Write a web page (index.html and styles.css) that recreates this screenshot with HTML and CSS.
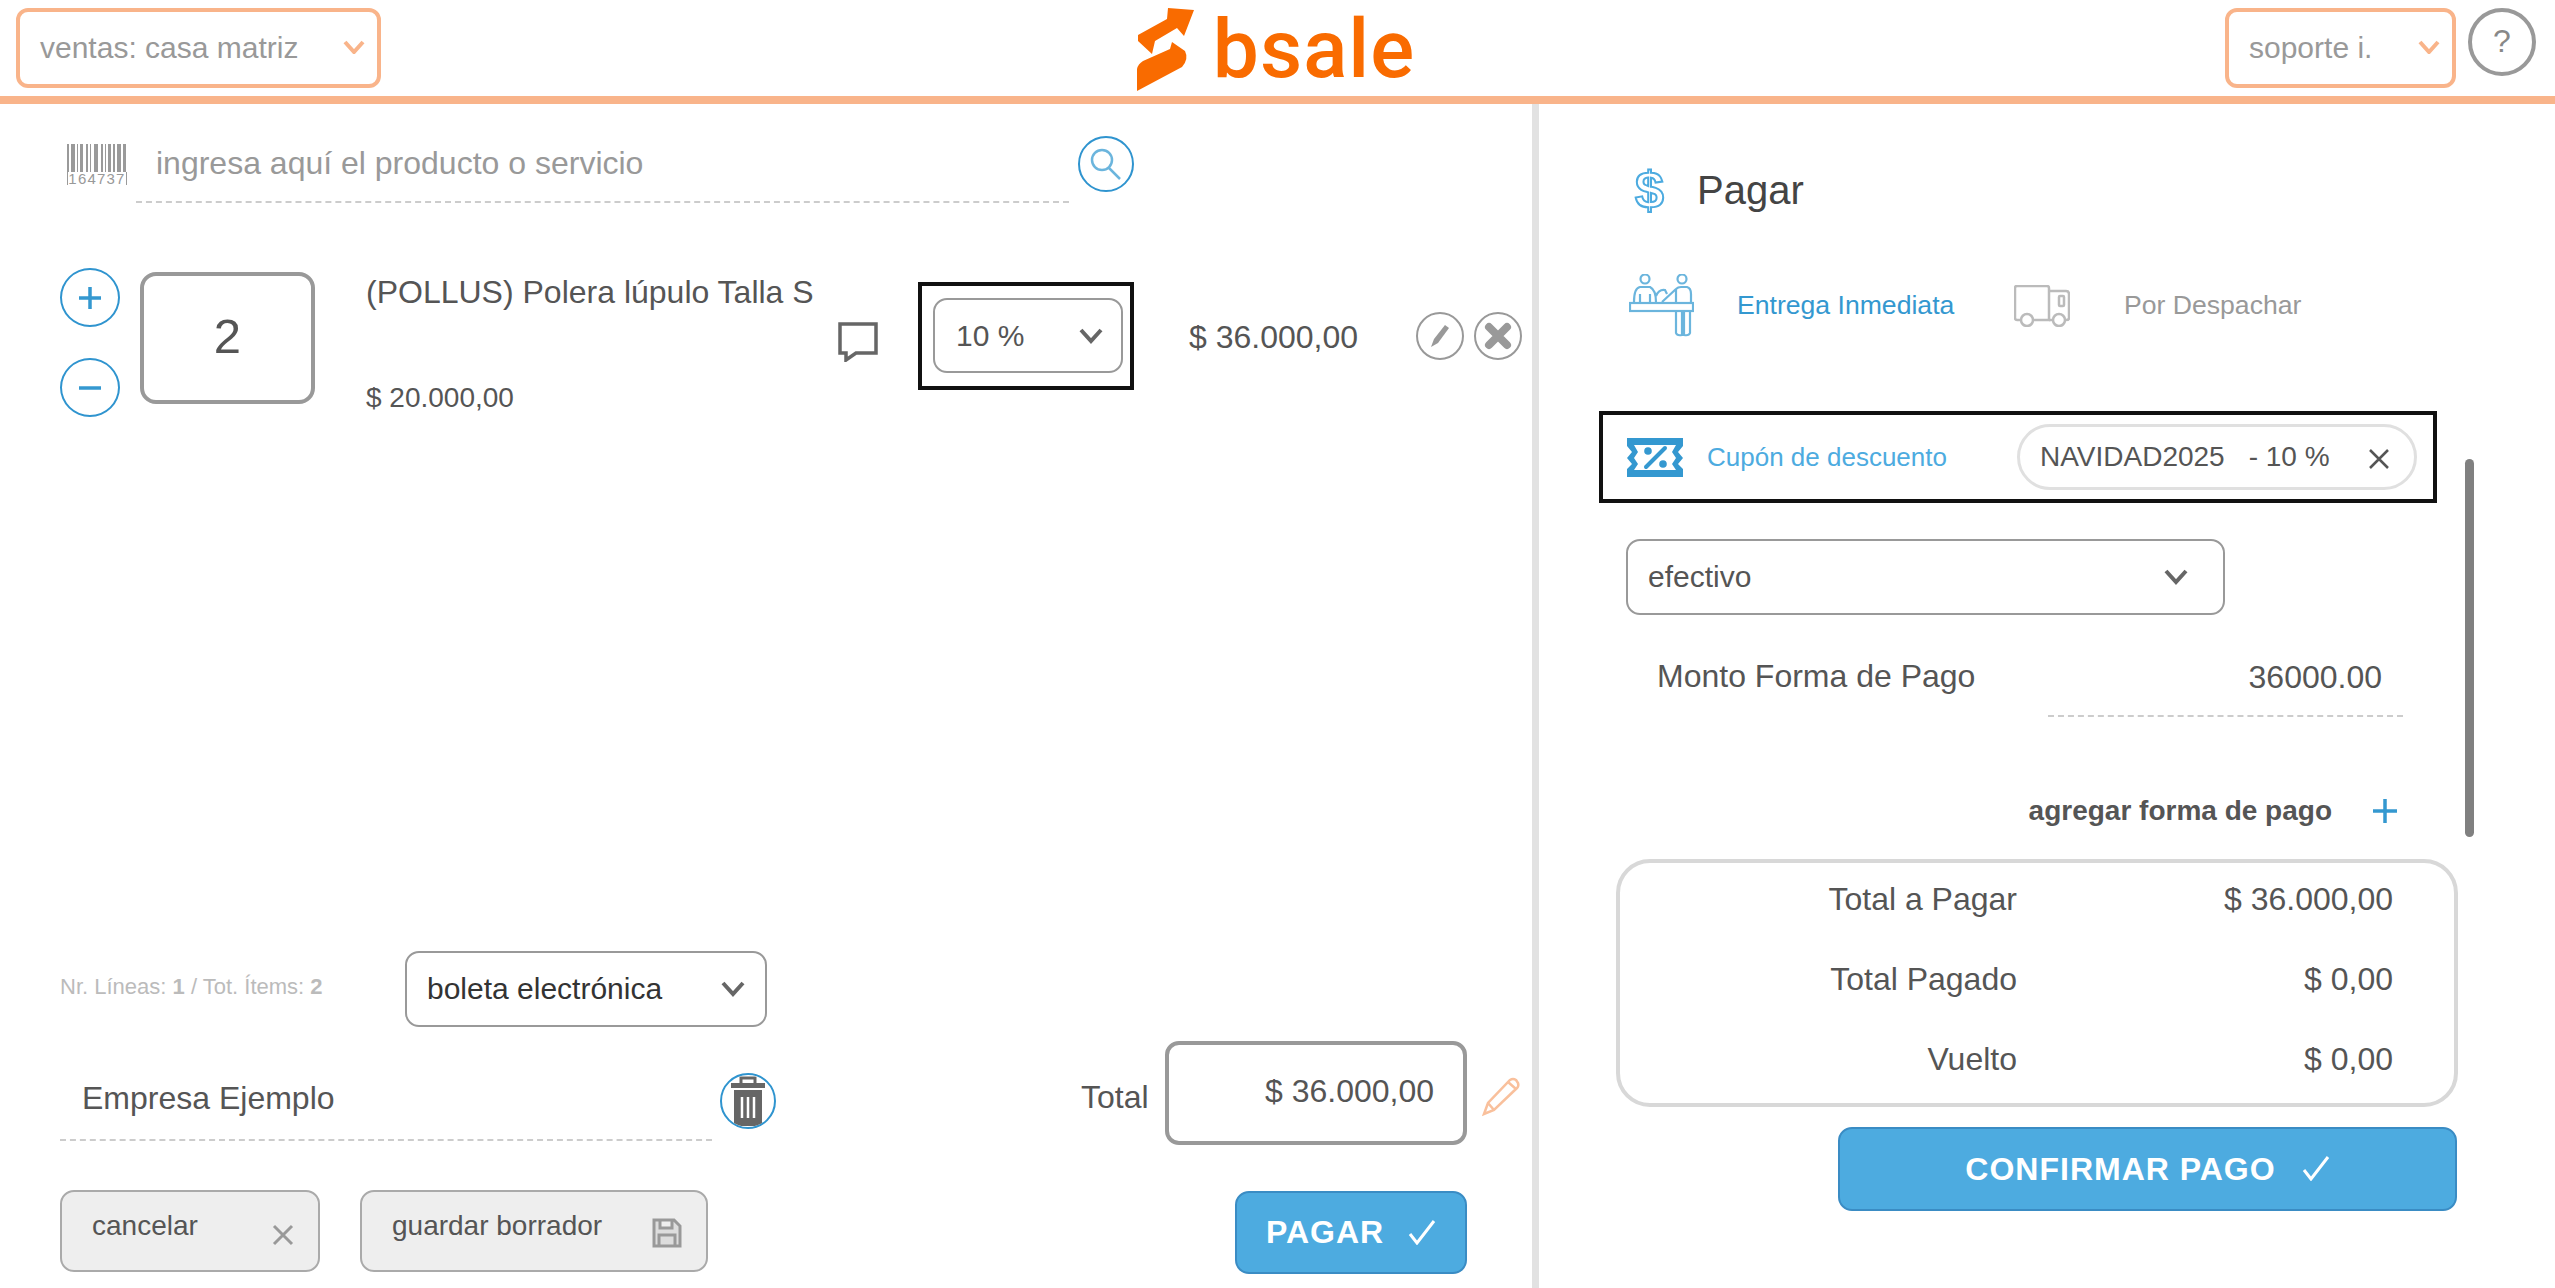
FILE: index.html
```html
<!DOCTYPE html>
<html lang="en">
<head>
    <meta charset="UTF-8">
    <meta name="viewport" content="width=device-width, initial-scale=1.0">
    <title>bsale punto de venta</title>
    <link rel="stylesheet" href="styles.css">
</head>
<body>
    <header class="topbar">
        <div class="topbar-left">
            <div class="top-select select-ventas">
                <span>ventas: casa matriz</span>
                <svg class="chev-top" viewBox="0 0 22 14"><path d="M2 2l9 10 9-10"/></svg>
            </div>
        </div>
        <div class="logo">
            <svg class="logo-mark" viewBox="0 0 58 88">
                <path d="M1 31 30 15 31 4 57 6 47 32 40 24 18 37 15 50 1 37Z"/>
                <path d="M35 38 48 47Q52 55 45 63L0 87V65Q1 60 6 57L33 45Z"/>
            </svg>
            <span class="logo-text">bsale</span>
        </div>
        <div class="topbar-right">
            <div class="top-select select-soporte">
                <span>soporte i.</span>
                <svg class="chev-top" viewBox="0 0 22 14"><path d="M2 2l9 10 9-10"/></svg>
            </div>
            <div class="help-btn">?</div>
        </div>
    </header>

    <main class="layout">
        <section class="sale-panel">
            <div class="search-row">
                <svg class="barcode" viewBox="0 0 62 42">
                    <g fill="#9a9a9a">
                        <rect x="1" width="2" height="28"/><rect x="5" width="4" height="28"/><rect x="11" width="1" height="28"/><rect x="14" width="3" height="28"/>
                        <rect x="20" width="2" height="28"/><rect x="24" width="1" height="28"/><rect x="28" width="4" height="28"/><rect x="35" width="2" height="28"/>
                        <rect x="39" width="1" height="28"/><rect x="42" width="3" height="28"/><rect x="47" width="2" height="28"/><rect x="51" width="4" height="28"/><rect x="57" width="3" height="28"/>
                        <rect x="1" y="28" width="1" height="13"/><rect x="60" y="28" width="1" height="13"/>
                    </g>
                    <text x="31" y="40" class="barcode-num">164737</text>
                </svg>
                <input class="search-input" type="text" placeholder="ingresa aquí el producto o servicio">
                <div class="circle-btn search-btn">
                    <svg viewBox="0 0 34 34" width="34" height="34"><circle cx="13" cy="13" r="10"/><path d="M20 21l11 11"/></svg>
                </div>
            </div>

            <div class="item-row">
                <div class="stepper">
                    <div class="circle-btn step-btn"><svg viewBox="0 0 26 26" width="26" height="26"><path d="M13 2v22M2 13h22"/></svg></div>
                    <div class="circle-btn step-btn"><svg viewBox="0 0 26 26" width="26" height="26"><path d="M2 13h22"/></svg></div>
                </div>
                <div class="qty-box">2</div>
                <div class="item-info">
                    <div class="item-name">(POLLUS) Polera lúpulo Talla S</div>
                    <div class="item-price">$ 20.000,00</div>
                </div>
                <svg class="comment-icon" viewBox="0 0 40 40"><path d="M2 2H38V31H18L8 38V31H2Z"/></svg>
                <div class="highlight-box discount-box">
                    <div class="select-box discount-select">
                        <span>10 %</span>
                        <svg class="chev" viewBox="0 0 24 16"><path d="M2 2l10 11L22 2"/></svg>
                    </div>
                </div>
                <div class="item-total">$ 36.000,00</div>
                <div class="round-grey">
                    <svg viewBox="0 0 24 28" width="24" height="28"><path d="M3 25l3-8L17 3l4 3L10 21Z"/></svg>
                </div>
                <div class="round-grey round-close">
                    <svg viewBox="0 0 28 28" width="28" height="28"><path d="M5 5l18 18M23 5L5 23"/></svg>
                </div>
            </div>

            <div class="sale-bottom">
                <div class="doc-row">
                    <div class="line-count">Nr. Líneas: <b>1</b> / Tot. Ítems: <b>2</b></div>
                    <div class="select-box doc-select">
                        <span>boleta electrónica</span>
                        <svg class="chev" viewBox="0 0 24 16"><path d="M2 2l10 11L22 2"/></svg>
                    </div>
                </div>
                <div class="client-row">
                    <div class="client-name">Empresa Ejemplo</div>
                    <div class="circle-btn trash-btn">
                        <svg viewBox="0 0 40 52" width="40" height="52">
                            <path class="trash-handle" d="M13 8V3H27V8"/>
                            <rect x="3" y="8" width="34" height="5" fill="#666"/>
                            <path fill="#666" d="M6 15H34V49Q34 51 32 51H8Q6 51 6 49Z"/>
                            <path class="trash-bars" d="M14 22V43M20 22V43M26 22V43"/>
                        </svg>
                    </div>
                    <div class="total-label">Total</div>
                    <div class="total-box">$ 36.000,00</div>
                    <svg class="edit-total" viewBox="0 0 40 42"><path d="M3 38l4-11L29 4q3-2 6 0l2 3q1 3-1 5L13 34ZM7 27l6 7M27 6l8 7"/></svg>
                </div>
                <div class="action-row">
                    <div class="grey-btn cancel-btn">
                        <span>cancelar</span>
                        <svg viewBox="0 0 22 22" width="22" height="22"><path d="M2 2l18 18M20 2L2 20"/></svg>
                    </div>
                    <div class="grey-btn draft-btn">
                        <span>guardar borrador</span>
                        <svg viewBox="0 0 30 30" width="30" height="30"><path d="M2 2H22L28 8V28H2ZM8 2V10H20V2M7 28V17H23V28"/></svg>
                    </div>
                    <div class="blue-btn pay-btn">
                        <span>PAGAR</span>
                        <svg class="check" viewBox="0 0 28 26"><path d="M2 15l7 9L26 2"/></svg>
                    </div>
                </div>
            </div>
        </section>

        <section class="pay-panel">
            <div class="pay-title">
                <span class="dollar-icon">$</span>
                <span>Pagar</span>
            </div>
            <div class="delivery-row">
                <svg class="desk-icon" viewBox="0 0 65 63">
                    <circle cx="16" cy="5" r="4.5"/><circle cx="53" cy="5" r="4.5"/>
                    <path d="M5 28Q5 14 11 13H21Q27 16 27 28M11 20V28M21 20V28"/>
                    <path d="M27 22Q30 15 36 16L38 20"/>
                    <path d="M33 28 47 15Q49 13 52 13H58Q62 14 62 20V29M47 15V29"/>
                    <rect x="1" y="29" width="63" height="8"/>
                    <path d="M47 37V59Q48 62 53 61V38M55 38V61Q60 62 61 59V37"/>
                </svg>
                <span class="delivery-now">Entrega Inmediata</span>
                <svg class="truck-icon" viewBox="0 0 56 42">
                    <path d="M7 35H3Q1 35 1 33V3Q1 1 3 1H33Q35 1 35 3V35H19"/>
                    <path d="M35 6H52Q55 6 55 9V33Q55 35 52 35H51M39 35H35"/>
                    <circle cx="13" cy="35" r="6"/><circle cx="45" cy="35" r="6"/>
                    <rect x="45" y="11" width="5" height="10" rx="1"/>
                </svg>
                <span class="delivery-later">Por Despachar</span>
            </div>

            <div class="highlight-box coupon-box">
                <svg class="ticket-icon" viewBox="0 0 56 39">
                    <path fill="#3498d0" d="M0 0H56V8L51 14 56 20 51 26 56 31V39H0V31L5 26 0 20 5 14 0 8Z"/>
                    <path fill="#fff" d="M7 7H49L45 14 49 20 45 26 49 32H7L11 26 7 20 11 14Z"/>
                    <circle cx="21" cy="13" r="3.8" fill="#3498d0"/>
                    <circle cx="36" cy="26" r="3.8" fill="#3498d0"/>
                    <path d="M19 29 38 10" stroke="#3498d0" stroke-width="4" stroke-linecap="round"/>
                </svg>
                <span class="coupon-label">Cupón de descuento</span>
                <div class="coupon-pill">
                    <span class="coupon-code">NAVIDAD2025</span>
                    <span class="coupon-value">- 10 %</span>
                    <svg viewBox="0 0 22 22" width="22" height="22"><path d="M2 2l18 18M20 2L2 20"/></svg>
                </div>
            </div>

            <div class="select-box method-select">
                <span>efectivo</span>
                <svg class="chev" viewBox="0 0 24 16"><path d="M2 2l10 11L22 2"/></svg>
            </div>
            <div class="amount-row">
                <div class="amount-label">Monto Forma de Pago</div>
                <div class="amount-value">36000.00</div>
            </div>
            <div class="add-method">
                <span>agregar forma de pago</span>
                <svg viewBox="0 0 26 26" width="26" height="26"><path d="M13 1v24M1 13h24"/></svg>
            </div>

            <div class="totals-card">
                <div class="totals-row"><span>Total a Pagar</span><span>$ 36.000,00</span></div>
                <div class="totals-row"><span>Total Pagado</span><span>$ 0,00</span></div>
                <div class="totals-row"><span>Vuelto</span><span>$ 0,00</span></div>
            </div>
            <div class="blue-btn confirm-btn">
                <span>CONFIRMAR PAGO</span>
                <svg class="check" viewBox="0 0 28 26"><path d="M2 15l7 9L26 2"/></svg>
            </div>
            <div class="scroll-thumb"></div>
        </section>
    </main>
</body>
</html>
```

FILE: styles.css
```css
* {
    box-sizing: border-box;
}
html, body {
    margin: 0;
    height: 100%;
}
body {
    font-family: "Liberation Sans", Arial, sans-serif;
    color: #555;
    background: #fff;
    overflow: hidden;
}
svg {
    display: block;
    flex: none;
}

/* top bar */
.topbar {
    height: 104px;
    border-bottom: 8px solid #f9b48a;
    display: grid;
    grid-template-columns: 1fr auto 1fr;
    padding: 8px 19px 0 16px;
}
.topbar-right {
    display: flex;
    justify-content: flex-end;
    align-items: flex-start;
    gap: 12px;
}
.top-select {
    height: 80px;
    border: 4px solid #f9b48a;
    border-radius: 12px;
    display: flex;
    align-items: center;
    justify-content: space-between;
    font-size: 30px;
    color: #999;
    padding: 0 12px 0 20px;
}
.select-ventas {
    width: 365px;
}
.select-soporte {
    width: 231px;
}
.chev-top {
    width: 22px;
    height: 14px;
    margin-top: -2px;
}
.chev-top path {
    fill: none;
    stroke: #f9b48a;
    stroke-width: 4;
}
.help-btn {
    width: 68px;
    height: 68px;
    border: 4px solid #999;
    border-radius: 50%;
    text-align: center;
    font-size: 32px;
    line-height: 58px;
    color: #888;
}
.logo {
    display: flex;
    align-items: flex-start;
    margin-top: -4px;
}
.logo-mark {
    width: 58px;
    height: 88px;
    fill: #f96b00;
}
.logo-text {
    font-family: Roboto, sans-serif;
    font-weight: 500;
    font-size: 82px;
    line-height: 96px;
    letter-spacing: 1px;
    color: #f96b00;
    margin: -3px 0 0 18px;
}

.layout {
    display: grid;
    grid-template-columns: 1539px 1fr;
    height: 1184px;
}

/* left side */
.sale-panel {
    border-right: 7px solid #e2e2e2;
    display: flex;
    flex-direction: column;
    padding: 32px 65px 14px 60px;
}
.search-row {
    display: flex;
    align-items: flex-start;
}
.barcode {
    width: 62px;
    height: 42px;
    margin: 8px 8px 0 6px;
}
.barcode-num {
    font-size: 15px;
    letter-spacing: 1.2px;
    fill: #999;
    text-anchor: middle;
}
.search-input {
    width: 933px;
    height: 67px;
    border: 0;
    border-bottom: 2px dashed #ccc;
    padding: 0 0 11px 20px;
    font: 32px "Liberation Sans", Arial, sans-serif;
    outline: none;
}
.search-input::placeholder {
    color: #999;
    opacity: 1;
}
.circle-btn {
    border: 2px solid #2f94cf;
    border-radius: 50%;
    display: flex;
    align-items: center;
    justify-content: center;
    flex: none;
}
.search-btn {
    width: 56px;
    height: 56px;
    margin-left: 9px;
}
.search-btn svg {
    fill: none;
    stroke: #6bb5dd;
    stroke-width: 2.5;
}
.item-row {
    display: flex;
    align-items: flex-start;
    margin-top: 65px;
    height: 149px;
}
.stepper {
    width: 60px;
    height: 149px;
    flex: none;
    display: flex;
    flex-direction: column;
    justify-content: space-between;
}
.step-btn {
    width: 60px;
    height: 59px;
}
.step-btn svg {
    fill: none;
    stroke: #3498d0;
    stroke-width: 3.5;
}
.qty-box {
    width: 175px;
    height: 132px;
    flex: none;
    margin: 4px 0 0 20px;
    border: 4px solid #999;
    border-radius: 16px;
    text-align: center;
    font-size: 49px;
    line-height: 120px;
}
.item-info {
    width: 472px;
    margin-left: 51px;
    flex: none;
}
.item-name {
    font-size: 32px;
    line-height: 36px;
    margin-top: 6px;
    white-space: nowrap;
}
.item-price {
    font-size: 28px;
    line-height: 34px;
    margin-top: 71px;
}
.comment-icon {
    width: 40px;
    height: 40px;
    margin-top: 54px;
    fill: none;
    stroke: #666;
    stroke-width: 3.5;
}
.highlight-box {
    border: 4px solid #111;
}
.discount-box {
    width: 216px;
    height: 108px;
    flex: none;
    margin: 14px 0 0 40px;
    padding: 12px 7px 0 11px;
}
.select-box {
    border: 2px solid #999;
    border-radius: 14px;
    display: flex;
    align-items: center;
    justify-content: space-between;
    font-size: 30px;
}
.chev {
    width: 24px;
    height: 16px;
}
.chev path {
    fill: none;
    stroke: #666;
    stroke-width: 4;
}
.discount-select {
    height: 75px;
    padding: 0 18px 0 21px;
}
.item-total {
    font-size: 32px;
    line-height: 38px;
    margin: 50px 0 0 55px;
    width: 227px;
    flex: none;
}
.round-grey {
    width: 48px;
    height: 48px;
    border: 2px solid #999;
    border-radius: 50%;
    margin-top: 44px;
    display: flex;
    align-items: center;
    justify-content: center;
    flex: none;
}
.round-grey svg {
    fill: #999;
}
.round-close {
    margin-left: 10px;
}
.round-close svg {
    fill: none;
    stroke: #999;
    stroke-width: 8;
    stroke-linecap: round;
}
.sale-bottom {
    margin-top: auto;
}
.doc-row {
    display: flex;
    align-items: center;
}
.line-count {
    width: 345px;
    font-size: 22px;
    color: #bbb;
    margin-top: -4px;
    white-space: nowrap;
}
.doc-select {
    width: 362px;
    height: 76px;
    padding: 0 20px 0 20px;
    color: #333;
}
.client-row {
    display: flex;
    align-items: flex-start;
    margin-top: 14px;
}
.client-name {
    width: 652px;
    height: 100px;
    padding: 38px 0 0 22px;
    font-size: 32px;
    line-height: 38px;
    border-bottom: 2px dashed #ccc;
}
.trash-btn {
    width: 56px;
    height: 56px;
    margin: 32px 0 0 8px;
    overflow: hidden;
}
.trash-handle {
    fill: none;
    stroke: #666;
    stroke-width: 3;
}
.trash-bars {
    fill: none;
    stroke: #fff;
    stroke-width: 2.5;
}
.total-label {
    font-size: 32px;
    line-height: 36px;
    margin: 38px 0 0 305px;
    width: 84px;
}
.total-box {
    width: 302px;
    height: 104px;
    border: 4px solid #999;
    border-radius: 14px;
    font-size: 32px;
    line-height: 92px;
    text-align: right;
    padding-right: 29px;
}
.edit-total {
    width: 40px;
    height: 42px;
    margin: 35px 0 0 14px;
    fill: none;
    stroke: #f9c09c;
    stroke-width: 2.5;
    margin-right: -54px;
}
.action-row {
    display: flex;
    align-items: flex-start;
    margin-top: 45px;
}
.grey-btn {
    height: 82px;
    background: #eee;
    border: 2.5px solid #aaa;
    border-radius: 14px;
    display: flex;
    justify-content: space-between;
    font-size: 28px;
    line-height: 34px;
    padding: 17px 24px 0 30px;
}
.cancel-btn {
    width: 260px;
}
.cancel-btn svg {
    margin-top: 15px;
    fill: none;
    stroke: #999;
    stroke-width: 3;
}
.draft-btn {
    width: 348px;
    margin-left: 40px;
}
.draft-btn svg {
    margin-top: 9px;
    fill: #ddd;
    stroke: #999;
    stroke-width: 3;
}
.blue-btn {
    background: #4dabe0;
    border: 2px solid #3a8cc4;
    border-radius: 14px;
    color: #fff;
    font-weight: 700;
    font-size: 32px;
    letter-spacing: 1px;
    display: flex;
    align-items: center;
    justify-content: center;
}
.pay-btn {
    width: 232px;
    height: 83px;
    margin: 1px 0 0 527px;
    gap: 24px;
}
.check {
    width: 28px;
    height: 26px;
    margin-top: -2px;
    fill: none;
    stroke: #fff;
    stroke-width: 3;
}

/* right side */
.pay-panel {
    position: relative;
    padding: 63px 0 0 60px;
}
.pay-title {
    display: flex;
    align-items: center;
    height: 46px;
    font-size: 40px;
    color: #444;
    margin-left: 36px;
}
.dollar-icon {
    width: 62px;
    font-size: 52px;
    font-weight: 700;
    line-height: 46px;
    color: #fff;
    -webkit-text-stroke: 2px #4dabe0;
}
.delivery-row {
    display: flex;
    align-items: center;
    height: 63px;
    margin: 61px 0 0 30px;
}
.desk-icon {
    width: 65px;
    height: 63px;
    fill: none;
    stroke: #6bb5dd;
    stroke-width: 2.2;
}
.delivery-now {
    font-size: 26.6px;
    color: #3498d0;
    margin-left: 43px;
    width: 277px;
    flex: none;
}
.truck-icon {
    width: 56px;
    height: 42px;
    fill: none;
    stroke: #bbb;
    stroke-width: 2.5;
}
.delivery-later {
    font-size: 26.6px;
    color: #999;
    margin-left: 54px;
}
.coupon-box {
    width: 838px;
    height: 92px;
    margin-top: 74px;
    display: flex;
    align-items: center;
    padding-left: 24px;
}
.ticket-icon {
    width: 56px;
    height: 39px;
}
.coupon-label {
    font-size: 26px;
    color: #4dabe0;
    margin-left: 24px;
    width: 310px;
    flex: none;
}
.coupon-pill {
    width: 400px;
    height: 66px;
    border: 3px solid #e0e0e0;
    border-radius: 33px;
    display: flex;
    align-items: center;
    font-size: 28px;
    padding-left: 20px;
}
.coupon-value {
    margin-left: 24px;
}
.coupon-pill svg {
    margin: 4px 0 0 38px;
    fill: none;
    stroke: #555;
    stroke-width: 2.5;
}
.method-select {
    width: 599px;
    height: 76px;
    margin: 36px 0 0 27px;
    padding: 0 35px 0 20px;
}
.amount-row {
    display: flex;
    margin: 38px 0 0 58px;
    height: 64px;
}
.amount-label {
    width: 391px;
    font-size: 32px;
    line-height: 46px;
}
.amount-value {
    width: 355px;
    font-size: 32px;
    line-height: 48px;
    text-align: right;
    padding-right: 21px;
    border-bottom: 2px dashed #ccc;
}
.add-method {
    display: flex;
    justify-content: flex-end;
    align-items: center;
    gap: 40px;
    width: 799px;
    margin-top: 81px;
    height: 26px;
    font-size: 28px;
    font-weight: 700;
}
.add-method svg {
    fill: none;
    stroke: #3498d0;
    stroke-width: 3.5;
}
.totals-card {
    width: 842px;
    height: 248px;
    margin: 35px 0 0 17px;
    border: 4px solid #d8d8d8;
    border-radius: 34px;
    padding-top: 16px;
}
.totals-row {
    display: flex;
    height: 80px;
    font-size: 32px;
    line-height: 40px;
}
.totals-row span:first-child {
    width: 397px;
    text-align: right;
}
.totals-row span:last-child {
    width: 376px;
    text-align: right;
}
.confirm-btn {
    width: 619px;
    height: 84px;
    margin: 20px 0 0 239px;
    gap: 26px;
}
.scroll-thumb {
    position: absolute;
    top: 355px;
    left: 926px;
    width: 9px;
    height: 378px;
    background: #808080;
    border-radius: 5px;
}
```
